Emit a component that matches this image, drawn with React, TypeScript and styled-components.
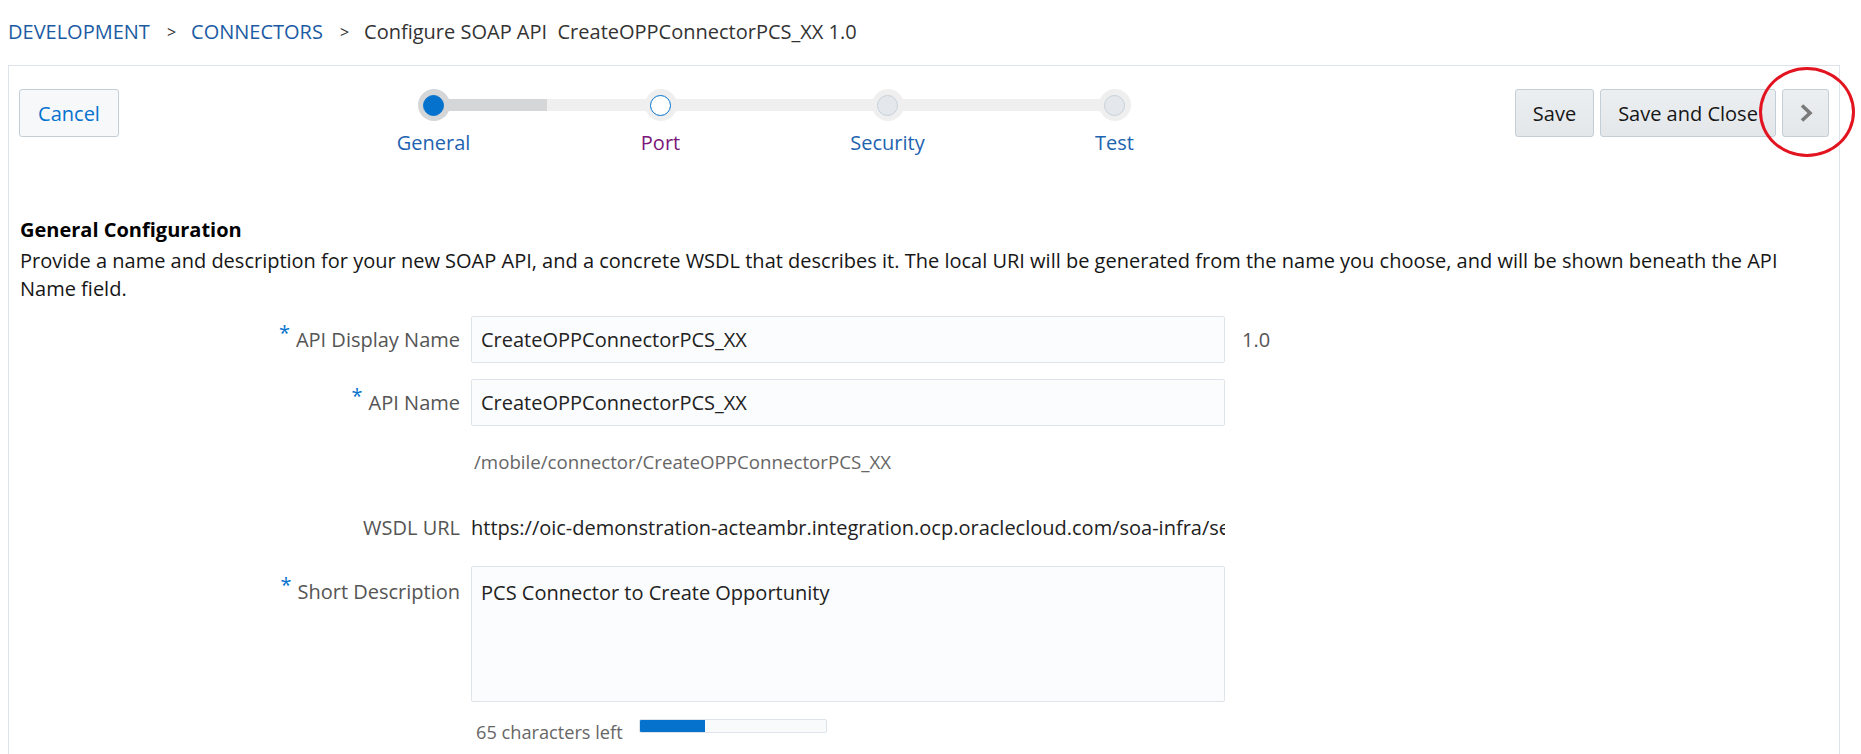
import React from "react";
import styled, { createGlobalStyle } from "styled-components";

const Global = createGlobalStyle`
  html, body { margin: 0; padding: 0; background: #fff; }
  body { font-family: "Open Sans", "Noto Sans", sans-serif; color: #333; overflow: hidden; }
  * { box-sizing: border-box; }
`;

const Page = styled.div`
  width: 1861px;
  height: 754px;
  overflow: hidden;
`;

const Breadcrumb = styled.nav`
  display: flex;
  align-items: center;
  height: 65px;
  padding: 0 0 2px 8px;
  font-size: 20px;
  white-space: pre;
`;

const Crumb = styled.a`
  color: #1c5ba3;
  text-decoration: none;
`;

const Sep = styled.span`
  color: #333;
  font-size: 16px;
  margin: 0 15px 0 17px;
`;

const Current = styled.span`
  color: #333;
`;

const Panel = styled.section`
  margin: 0 21px 0 8px;
  border: 1px solid #dfe4ea;
  border-bottom: none;
  min-height: 720px;
  padding: 23px 10px 0 10px;
`;

const Header = styled.div`
  display: flex;
  align-items: flex-start;
`;

const BaseButton = styled.button<{ $w: number }>`
  width: ${(p) => p.$w}px;
  height: 48px;
  border: 1px solid #c4ced7;
  border-radius: 3px;
  font-family: inherit;
  font-size: 20px;
  padding: 0;
  display: flex;
  align-items: center;
  justify-content: center;
  cursor: pointer;
`;

const CancelButton = styled(BaseButton)`
  background: #f7f8fa;
  color: #0572ce;
`;

const ActionButton = styled(BaseButton)`
  background: linear-gradient(#eceff1, #e3e7ea);
  color: #161616;
`;

const Train = styled.div`
  display: flex;
  margin-left: 201px;
`;

const Step = styled.div`
  width: 227px;
  display: flex;
  flex-direction: column;
  align-items: center;
`;

const StepTrack = styled.div`
  position: relative;
  width: 100%;
  height: 32px;
  display: flex;
  align-items: center;
  justify-content: center;
`;

const Half = styled.div<{ $side: "left" | "right"; $tone: "dark" | "light" | "none" }>`
  position: absolute;
  top: 10px;
  height: 12px;
  width: 50%;
  ${(p) => (p.$side === "left" ? "left: 0;" : "right: 0;")}
  background: ${(p) =>
    p.$tone === "dark" ? "#d5d6d8" : p.$tone === "light" ? "#efefef" : "transparent"};
`;

const Ring = styled.div<{ $dark: boolean }>`
  position: relative;
  width: 32px;
  height: 32px;
  border-radius: 50%;
  background: ${(p) => (p.$dark ? "#d5d6d8" : "#efefef")};
  display: flex;
  align-items: center;
  justify-content: center;
`;

const Dot = styled.div<{ $kind: "selected" | "visited" | "disabled" }>`
  width: 21px;
  height: 21px;
  border-radius: 50%;
  background: ${(p) =>
    p.$kind === "selected" ? "#0572ce" : p.$kind === "visited" ? "#fff" : "#e4e8ec"};
  border: 1px solid
    ${(p) => (p.$kind === "disabled" ? "#c6d0d9" : "#0572ce")};
`;

const StepLabel = styled.div<{ $visited?: boolean }>`
  margin-top: 10px;
  font-size: 20px;
  line-height: 24px;
  color: ${(p) => (p.$visited ? "#7b157a" : "#1e63b0")};
`;

const Actions = styled.div`
  margin-left: auto;
  display: flex;
  gap: 6px;
`;

const Annotated = styled.div`
  position: relative;
`;

const RedCircle = styled.div`
  position: absolute;
  left: -23px;
  top: -22px;
  width: 96px;
  height: 90px;
  border: 3px solid #e2141f;
  border-radius: 50%;
  pointer-events: none;
`;

const Title = styled.h2`
  margin: 61px 0 0 1px;
  font-size: 20px;
  line-height: 28px;
  font-weight: 700;
  color: #000;
`;

const Intro = styled.p`
  margin: 3px 0 0 1px;
  font-size: 20px;
  line-height: 28px;
  color: #161616;
  width: 1790px;
`;

const Row = styled.div<{ $mt: number }>`
  display: grid;
  grid-template-columns: 441px 754px auto;
  column-gap: 11px;
  align-items: start;
  margin-top: ${(p) => p.$mt}px;
`;

const Label = styled.label<{ $lh: number }>`
  text-align: right;
  font-size: 20px;
  line-height: ${(p) => p.$lh}px;
  color: #555;
  white-space: nowrap;
`;

const Req = styled.span`
  color: #0572ce;
  font-size: 20px;
  position: relative;
  top: -7px;
  margin-right: 6px;
`;

const TextInput = styled.input`
  width: 754px;
  height: 47px;
  border: 1px solid #dfe4ea;
  border-radius: 2px;
  background: #fbfcfd;
  padding: 0 9px;
  font-family: inherit;
  font-size: 20px;
  color: #222;
  outline: none;
`;

const TextArea = styled.textarea`
  width: 754px;
  height: 136px;
  border: 1px solid #dfe4ea;
  border-radius: 2px;
  background: #fbfcfd;
  padding: 12px 9px;
  font-family: inherit;
  font-size: 20px;
  line-height: 28px;
  color: #222;
  resize: none;
  outline: none;
`;

const Side = styled.span`
  font-size: 20px;
  line-height: 47px;
  color: #555;
  margin-left: 6px;
`;

const Helper = styled.div`
  padding-left: 3px;
  font-size: 18.7px;
  line-height: 24px;
  color: #666;
`;

const Value = styled.div`
  font-size: 20px;
  line-height: 28px;
  color: #222;
  white-space: nowrap;
  overflow: hidden;
`;

const Counter = styled.div`
  display: flex;
  align-items: flex-start;
  padding-left: 5px;
`;

const CounterText = styled.span`
  font-size: 18.2px;
  line-height: 24px;
  color: #666;
`;

const Meter = styled.div`
  margin: -1px 0 0 16px;
  width: 188px;
  height: 14px;
  border: 1px solid #dfe4ea;
  border-radius: 2px;
  background: #f9fafc;
  overflow: hidden;
`;

const MeterFill = styled.div`
  height: 100%;
  background: #0572ce;
`;

type StepKind = "selected" | "visited" | "disabled";
const steps: { name: string; kind: StepKind }[] = [
  { name: "General", kind: "selected" },
  { name: "Port", kind: "visited" },
  { name: "Security", kind: "disabled" },
  { name: "Test", kind: "disabled" },
];

const Chevron = () => (
  <svg width="14" height="20" viewBox="0 0 14 20" aria-hidden="true">
    <polyline points="3,2.5 11,10 3,17.5" fill="none" stroke="#7b7b7b" strokeWidth="3.6" />
  </svg>
);

export default function App() {
  const used = 35;
  const max = 100;
  return (
    <Page>
      <Global />
      <Breadcrumb>
        <Crumb>DEVELOPMENT</Crumb>
        <Sep>&gt;</Sep>
        <Crumb>CONNECTORS</Crumb>
        <Sep>&gt;</Sep>
        <Current>Configure SOAP API  CreateOPPConnectorPCS_XX 1.0</Current>
      </Breadcrumb>
      <Panel>
        <Header>
          <CancelButton $w={100}>Cancel</CancelButton>
          <Train>
            {steps.map((s, i) => (
              <Step key={s.name}>
                <StepTrack>
                  <Half $side="left" $tone={i === 0 ? "none" : "light"} />
                  <Half
                    $side="right"
                    $tone={i === steps.length - 1 ? "none" : s.kind === "selected" ? "dark" : "light"}
                  />
                  <Ring $dark={s.kind === "selected"}>
                    <Dot $kind={s.kind} />
                  </Ring>
                </StepTrack>
                <StepLabel $visited={s.kind === "visited"}>{s.name}</StepLabel>
              </Step>
            ))}
          </Train>
          <Actions>
            <ActionButton $w={79}>Save</ActionButton>
            <ActionButton $w={176}>Save and Close</ActionButton>
            <Annotated>
              <ActionButton $w={47} aria-label="Next">
                <Chevron />
              </ActionButton>
              <RedCircle />
            </Annotated>
          </Actions>
        </Header>

        <Title>General Configuration</Title>
        <Intro>
          Provide a name and description for your new SOAP API, and a concrete WSDL that describes it. The local URI
          will be generated from the name you choose, and will be shown beneath the API Name field.
        </Intro>

        <Row $mt={13}>
          <Label $lh={47}>
            <Req>*</Req>API Display Name
          </Label>
          <TextInput readOnly defaultValue="CreateOPPConnectorPCS_XX" />
          <Side>1.0</Side>
        </Row>
        <Row $mt={16}>
          <Label $lh={47}>
            <Req>*</Req>API Name
          </Label>
          <TextInput readOnly defaultValue="CreateOPPConnectorPCS_XX" />
        </Row>
        <Row $mt={24}>
          <span />
          <Helper>/mobile/connector/CreateOPPConnectorPCS_XX</Helper>
        </Row>
        <Row $mt={40}>
          <Label $lh={28}>WSDL URL</Label>
          <Value>https://oic-demonstration-acteambr.integration.ocp.oraclecloud.com/soa-infra/se</Value>
        </Row>
        <Row $mt={24}>
          <Label $lh={52}>
            <Req>*</Req>Short Description
          </Label>
          <TextArea readOnly defaultValue="PCS Connector to Create Opportunity" />
        </Row>
        <Row $mt={18}>
          <span />
          <Counter>
            <CounterText>65 characters left</CounterText>
            <Meter>
              <MeterFill style={{ width: `${(used / max) * 100}%` }} />
            </Meter>
          </Counter>
        </Row>
      </Panel>
    </Page>
  );
}
